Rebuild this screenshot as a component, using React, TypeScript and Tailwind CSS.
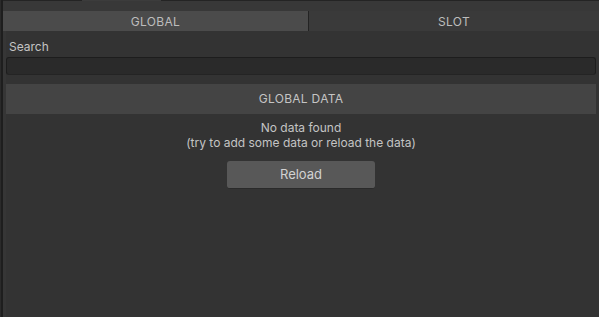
import React from 'react';

const App: React.FC = () => {
  const tabs = [
    { id: 'global', label: 'GLOBAL', active: true },
    { id: 'slot', label: 'SLOT', active: false },
  ];

  return (
    <div
      className="flex h-[317px] w-[599px] overflow-hidden bg-[#333333] text-[12px] text-[#c4c4c4]"
      style={{ fontFamily: 'Inter, "Noto Sans", sans-serif' }}
    >
      {/* left window edge */}
      <div className="w-[1px] bg-[#2a2a2a]" />
      <div className="w-[2px] bg-[#1e1e1e]" />

      <div className="flex flex-1 flex-col">
        {/* top strip with docked tab */}
        <div className="flex h-[11px] flex-col bg-[#383838]">
          <div className="flex h-[1px]">
            <div className="w-[79px] bg-[#242424]" />
            <div className="w-[79px] bg-[#3c3c3c]" />
            <div className="flex-1 bg-[#242424]" />
          </div>
        </div>

        {/* tabs */}
        <div className="flex h-[20px]">
          {tabs.map((tab) => (
            <div
              key={tab.id}
              className={
                tab.active
                  ? 'flex w-[306px] items-center justify-center border-r border-[#232323] bg-[#4b4b4b] pt-[1px] tracking-[0.3px] text-[#bdbdbd]'
                  : 'flex flex-1 items-center justify-center bg-[#3a3a3a] pt-[1px] tracking-[0.3px] text-[#bdbdbd]'
              }
            >
              {tab.label}
            </div>
          ))}
        </div>

        <div className="flex flex-col bg-[#363636] pl-[3px]">
          <div className="flex flex-col bg-[#333333] pr-[3px]">
            <div className="pl-[3px] pt-[8px] leading-[15px] text-[#c4c4c4]">Search</div>
            <div className="mt-[3px] h-[18px] rounded-[3px] border border-[#1d1d1d] border-b-[#242424] bg-[#2a2a2a]" />

            <div className="mt-[9px] flex h-[30px] items-center justify-center bg-[#444444] tracking-[0.3px] text-[#c4c4c4]">
              GLOBAL DATA
            </div>

            <div className="mt-[6px] flex flex-col items-center leading-[15px] text-[#c4c4c4]">
              <span>No data found</span>
              <span>(try to add some data or reload the data)</span>
            </div>

            <div className="mt-[11px] flex justify-center">
              <button className="h-[28px] w-[148px] rounded-[3px] border-b border-[#2a2a2a] bg-[#585858] pt-[1px] text-[13px] text-[#d2d2d2]">
                Reload
              </button>
            </div>
          </div>
        </div>
        <div className="flex flex-1 bg-[#363636] pl-[3px]">
          <div className="flex-1 bg-[#333333]" />
        </div>
      </div>
    </div>
  );
};

export default App;
